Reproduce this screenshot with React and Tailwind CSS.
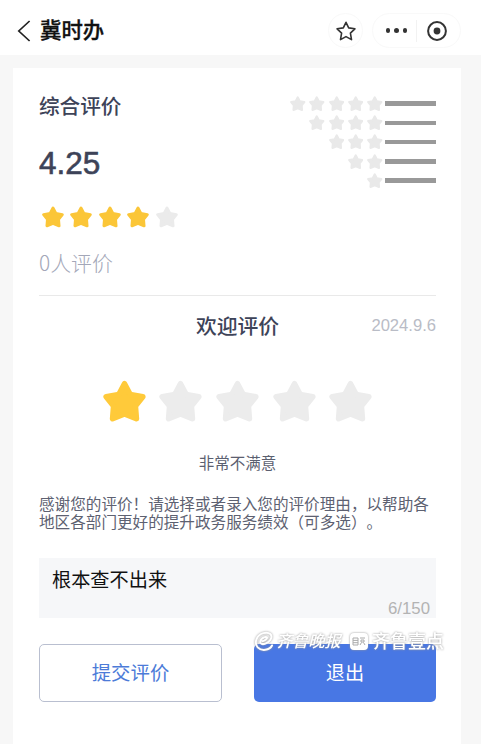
import React, { useState } from 'react';
import { clsx } from 'clsx';

const StarIcon = ({ className }) => (
  <svg viewBox="0 0 43 42" className={clsx('shrink-0', className)} fill="currentColor" stroke="currentColor">
    <path
      d="M21.5 3.2L27.2 14L39.8 16.2L32.4 25.6L33.4 38.2L21.5 33.4L9.6 38.2L10.6 25.6L3.2 16.2L15.8 14Z"
      strokeWidth="5.6"
      strokeLinejoin="round"
    />
  </svg>
);

const breakdown = [5, 4, 3, 2, 1];

const Header = () => (
  <header className="flex h-[55px] items-center bg-white pt-[6px] pl-[17px] pr-[20px]">
    <svg viewBox="0 0 14 22" className="h-[22px] w-[14px]" fill="none" stroke="#222" strokeWidth="1.7">
      <path d="M12.6 1L1.8 11L12.6 21" />
    </svg>
    <h1 className="ml-[9px] pt-[3px] text-[21.4px] leading-none font-medium text-[#111] [-webkit-text-stroke:0.3px_#111]">
      冀时办
    </h1>
    <div className="ml-auto flex h-[35px] w-[35px] items-center justify-center rounded-full border border-[#f9f9f9]">
      <svg viewBox="0 0 20 20" className="h-5 w-5" fill="none" stroke="#333" strokeWidth="1.6" strokeLinejoin="round">
        <path d="M10 1.3L12.7 6.9L18.9 7.8L14.4 12.1L15.5 18.6L10 15.6L4.5 18.6L5.6 12.1L1.1 7.8L7.3 6.9Z" />
      </svg>
    </div>
    <div className="ml-[9px] flex h-[35px] w-[89px] items-center rounded-full border border-[#f9f9f9]">
      <div className="flex h-[22px] w-[44px] items-center justify-center gap-[4px] border-r border-[#f2f2f2] pl-[4px]">
        <span className="h-[4.6px] w-[4.6px] rounded-full bg-[#333]" />
        <span className="h-[4.6px] w-[4.6px] rounded-full bg-[#333]" />
        <span className="h-[4.6px] w-[4.6px] rounded-full bg-[#333]" />
      </div>
      <svg viewBox="0 0 20 20" className="ml-[10px] h-5 w-5">
        <circle cx="10" cy="10" r="8.9" fill="none" stroke="#333" strokeWidth="2" />
        <circle cx="10" cy="10" r="3.4" fill="#333" />
      </svg>
    </div>
  </header>
);

const Watermark = () => (
  <div className="pointer-events-none absolute -top-[15px] left-0 flex h-[24px] items-center whitespace-nowrap text-white [filter:drop-shadow(0_0_0.8px_#999)]">
    <svg viewBox="0 0 20 20" className="h-[20px] w-[20px]" fill="none" stroke="currentColor">
      <path d="M18 14.5C15.5 19.5 7.5 20.4 3.7 16.4C-0.3 11.8 2.6 4 9.3 2.1C15.5 0.4 19.3 4.2 16.4 8.7C14.2 12.2 8.6 14.4 6.7 12.2C5.2 10.3 8 6.2 11.6 5.9C14.2 5.8 13.2 8.7 8.5 10.2" strokeWidth="2" strokeLinecap="round" />
    </svg>
    <span className="ml-[2px] inline-block w-[65px] text-[16.2px] leading-none font-medium italic">
      齐鲁晚报
    </span>
    <span className="ml-[9px] flex h-[17px] w-[18px] items-center justify-center rounded-[4px] bg-white">
      <svg viewBox="0 0 14 9" className="h-[9px] w-[14px]" fill="none" stroke="#aaa" strokeWidth="1">
        <path d="M1 1H6V8H1ZM1 3.4H6M1 5.7H6M8 1H13M9 3H12V5H9ZM8 8L9.5 5.5M13 8L11.5 5.5" />
      </svg>
    </span>
    <span className="ml-[4px] pt-[2px] text-[18px] leading-none font-medium">齐鲁壹点</span>
  </div>
);

const App = () => {
  const [rating, setRating] = useState(1);
  const [reason, setReason] = useState('根本查不出来');

  return (
    <div className="h-[744px] w-[481px] overflow-hidden bg-[#f7f7f7] font-['Liberation_Sans','Noto_Sans_CJK_SC',sans-serif] text-[#3d4358]">
      <Header />

      <main className="mt-[13px] mr-[20px] ml-[13px] h-[676px] bg-white pr-[25px] pl-[26px]">
        {/* Overall score */}
        <section className="flex h-[228px] justify-between border-b border-[#e9e9e9]">
          <div className="flex flex-col items-start">
            <h2 className="mt-[27px] flex h-[24px] items-center text-[20.6px] leading-none font-medium">综合评价</h2>
            <p className="mt-[30px] flex h-[30px] items-center text-[31.5px] leading-none [-webkit-text-stroke:0.6px_#3d4358]">
              4.25
            </p>
            <div className="mt-[27px] ml-[3px] flex gap-[6.4px]">
              {[1, 2, 3, 4, 5].map((n) => (
                <StarIcon key={n} className={clsx('h-[22px] w-[22px]', n <= 4 ? 'text-[#fbc638]' : 'text-[#ebebeb]')} />
              ))}
            </div>
            <p className="mt-[22px] flex h-[24px] items-center font-['Noto_Sans_CJK_SC',sans-serif] text-[20.9px] leading-none font-light text-[#a3a7b8]">
              0人评价
            </p>
          </div>

          <div className="flex flex-col items-end pt-[26px]">
            {breakdown.map((count) => (
              <div key={count} className="flex h-[19.25px] items-center">
                <div className="flex gap-[3.7px]">
                  {Array.from({ length: count }, (_, i) => (
                    <StarIcon key={i} className="h-[15.5px] w-[15.5px] text-[#e9e9e9]" />
                  ))}
                </div>
                <span className="ml-[2.5px] h-[4.5px] w-[51px] bg-[#999]" />
              </div>
            ))}
          </div>
        </section>

        {/* Rating form */}
        <section>
          <div className="grid h-[60px] grid-cols-[1fr_auto_1fr] items-center">
            <h2 className="col-start-2 pt-[2px] text-[20.8px] leading-none font-medium">欢迎评价</h2>
            <span className="justify-self-end text-[16.6px] leading-none text-[#b9bcc6]">2024.9.6</span>
          </div>

          <div className="mt-[24px] flex justify-center gap-[13.7px]">
            {[1, 2, 3, 4, 5].map((n) => (
              <button key={n} type="button" onClick={() => setRating(n)}>
                <StarIcon className={clsx('block h-[43px] w-[43px]', n <= rating ? 'text-[#ffca3a]' : 'text-[#ececec]')} />
              </button>
            ))}
          </div>

          <p className="mt-[29px] flex h-[24px] items-center justify-center text-[15.5px] leading-none text-[#5b6070]">
            非常不满意
          </p>

          <p className="mt-[20px] text-[15.6px] leading-[18px] whitespace-nowrap text-[#5d6171] [text-spacing-trim:space-all]">
            感谢您的评价！请选择或者录入您的评价理由，以帮助各
            <br />
            地区各部门更好的提升政务服务绩效（可多选）。
          </p>

          <div className="mt-[26px] flex h-[60px] flex-col bg-[#f6f7f9]">
            <input
              value={reason}
              onChange={(e) => setReason(e.target.value)}
              className="mt-[9px] h-[24px] bg-transparent px-[13px] text-[19.2px] leading-none text-[#111] outline-none"
            />
            <span className="mt-[9px] pr-[6px] text-right text-[16.8px] leading-[18px] text-[#b3b3b3]">
              {reason.length}/150
            </span>
          </div>

          <div className="mt-[26px] flex justify-between">
            <button
              type="button"
              className="h-[58px] w-[183px] rounded-[5px] border border-[#b9bfd0] bg-white pt-[2px] text-[19.4px] leading-none text-[#4c7bd8]"
            >
              提交评价
            </button>
            <div className="relative">
              <button
                type="button"
                className="h-[58px] w-[182px] rounded-[5px] bg-[#4877e4] pt-[2px] text-[19.2px] leading-none text-white"
              >
                退出
              </button>
              <Watermark />
            </div>
          </div>
        </section>
      </main>
    </div>
  );
};

export default App;
